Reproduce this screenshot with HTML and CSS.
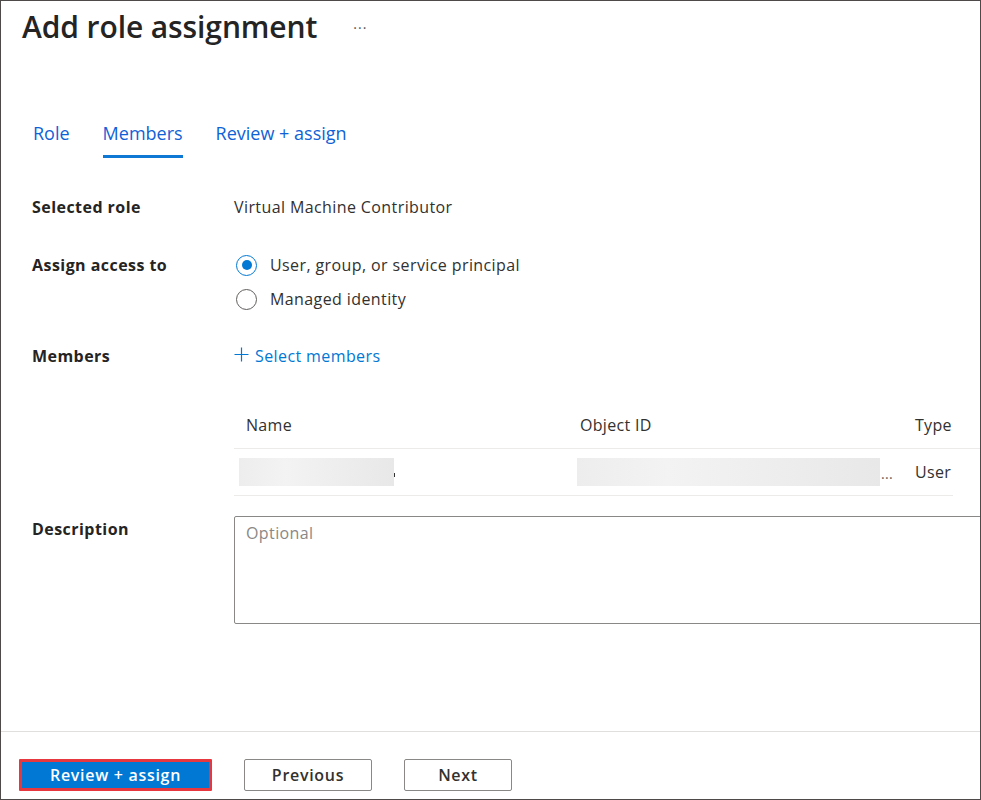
FILE: index.html
```html
<!DOCTYPE html>
<html lang="en">
<head>
<meta charset="utf-8">
<title>Add role assignment</title>
<link rel="stylesheet" href="styles.css">
</head>
<body>
<div class="frame">
  <header class="header">
    <h1 class="title">Add role assignment</h1>
    <span class="more">···</span>
  </header>

  <nav class="tabs">
    <a class="tab">Role</a>
    <a class="tab active">Members</a>
    <a class="tab">Review + assign</a>
  </nav>

  <section class="form">
    <div class="row row-role">
      <div class="label">Selected role</div>
      <div class="value">Virtual Machine Contributor</div>
    </div>

    <div class="row row-access">
      <div class="label">Assign access to</div>
      <div class="value radios">
        <label class="radio"><span class="dot checked"></span>User, group, or service principal</label>
        <label class="radio"><span class="dot"></span>Managed identity</label>
      </div>
    </div>

    <div class="row row-members">
      <div class="label">Members</div>
      <div class="value">
        <a class="add-link"><svg class="plus" width="15" height="15" viewBox="0 0 15 15"><path d="M7.5 0.5v14M0.5 7.5h14" stroke="#0078d4" stroke-width="1.2" fill="none"/></svg>Select members</a>
      </div>
    </div>

    <div class="row row-table">
      <div class="label"></div>
      <div class="value table">
        <div class="trow thead">
          <div class="cell c-name">Name</div>
          <div class="cell c-id">Object ID</div>
          <div class="cell c-type">Type</div>
        </div>
        <div class="trow tbody">
          <div class="cell c-name"><span class="blur blur-name"></span><span class="tick"></span></div>
          <div class="cell c-id"><span class="blur blur-id"></span><span class="ellipsis">...</span></div>
          <div class="cell c-type">User</div>
        </div>
      </div>
    </div>

    <div class="row row-desc">
      <div class="label">Description</div>
      <div class="value">
        <textarea class="desc" placeholder="Optional"></textarea>
      </div>
    </div>
  </section>

  <footer class="footer">
    <button class="btn primary">Review + assign</button>
    <button class="btn secondary prev">Previous</button>
    <button class="btn secondary next">Next</button>
  </footer>
</div>
</body>
</html>
```

FILE: styles.css
```css
* { box-sizing: border-box; }

html, body {
  margin: 0;
  padding: 0;
  background: #ffffff;
}

body {
  font-family: "Open Sans", "Noto Sans", "Liberation Sans", sans-serif;
  color: #323130;
  font-size: 16px;
}

.frame {
  width: 981px;
  height: 800px;
  border: 1px solid #4e4a4a;
  overflow: hidden;
  display: flex;
  flex-direction: column;
  background: #fff;
}

.header {
  display: flex;
  align-items: center;
  padding: 9px 0 0 21px;
  height: 43px;
}

.title {
  margin: 0;
  font-size: 30px;
  font-weight: 600;
  color: #242424;
  line-height: 38px;
  letter-spacing: -0.1px;
}

.more {
  margin-left: 36px;
  font-size: 14px;
  color: #555;
  letter-spacing: 1px;
  line-height: 20px;
  margin-top: 2px;
}

.tabs {
  display: flex;
  gap: 33px;
  padding-left: 32px;
  margin-top: 70px;
  height: 44px;
}

.tab {
  font-size: 18px;
  color: #0f62d6;
  line-height: 24px;
  padding-top: 7px;
  height: 44px;
  cursor: pointer;
}

.tab.active {
  border-bottom: 3px solid #0f78d4;
}

.form {
  display: flex;
  flex-direction: column;
}

.row {
  display: flex;
}

.label {
  width: 233px;
  flex: none;
  padding-left: 31px;
  font-weight: 700;
  font-size: 16px;
  letter-spacing: 0.45px;
  line-height: 20px;
  color: #252423;
}

.value {
  flex: 1;
  line-height: 20px;
  font-size: 16px;
  letter-spacing: 0.4px;
  color: #323130;
}

.row-role { margin-top: 39px; }

.row-access { margin-top: 38px; }

.radios {
  display: flex;
  flex-direction: column;
  gap: 14px;
}

.radio {
  display: flex;
  align-items: center;
  gap: 13px;
  padding-left: 2px;
  height: 20px;
}

.dot {
  width: 21px;
  height: 21px;
  border-radius: 50%;
  border: 1px solid #605e5c;
  flex: none;
  position: relative;
}

.dot.checked {
  border-color: #0078d4;
}

.dot.checked::after {
  content: "";
  position: absolute;
  left: 4.5px;
  top: 4.5px;
  width: 10px;
  height: 10px;
  border-radius: 50%;
  background: #0078d4;
}

.row-members { margin-top: 37px; }

.add-link {
  display: inline-flex;
  align-items: center;
  color: #0078d4;
  cursor: pointer;
}

.plus {
  margin-right: 6px;
  margin-top: -3px;
}

.row-table { margin-top: 36px; }

.table {
  display: flex;
  flex-direction: column;
  letter-spacing: 0.3px;
}

.trow {
  display: flex;
  align-items: center;
}

.thead {
  height: 47px;
  border-bottom: 1px solid #edebe9;
  color: #323130;
  font-weight: 500;
}

.tbody {
  height: 47px;
  border-bottom: 1px solid #edebe9;
  margin-right: 27px;
}

.cell {
  display: flex;
  align-items: center;
}

.c-name { width: 334px; padding-left: 12px; }
.c-id { width: 335px; padding-left: 12px; }
.c-type { padding-left: 12px; }

.tbody .c-name { padding-left: 5px; }
.tbody .c-id { padding-left: 9px; }

.blur {
  display: block;
  height: 28px;
  background: linear-gradient(90deg, #ededed 0%, #f3f3f3 30%, #efefef 55%, #e8e8e8 100%);
}

.blur-name { width: 155px; }
.blur-id { width: 303px; }

.tick {
  display: block;
  width: 1px;
  height: 4px;
  background: #333;
  margin-top: 6px;
}

.ellipsis {
  color: #605e5c;
  margin-left: 1px;
  font-size: 14px;
  margin-top: 4px;
}

.tbody .c-type { color: #323130; }

.row-desc { margin-top: 20px; }

.row-desc .label { padding-top: 3px; }

.desc {
  display: block;
  width: 800px;
  height: 108px;
  border: 1px solid #8a8886;
  border-radius: 2px;
  padding: 5px 11px;
  font-family: "Open Sans", "Noto Sans", "Liberation Sans", sans-serif;
  font-size: 16px;
  letter-spacing: 0.4px;
  resize: none;
  outline: none;
  color: #323130;
}

.desc::placeholder {
  color: #8a8886;
  font-weight: 400;
}

.footer {
  margin-top: auto;
  height: 68px;
  border-top: 1px solid #e1dfdd;
  display: flex;
  align-items: flex-start;
  padding: 27px 0 0 18px;
  gap: 32px;
}

.btn {
  height: 32px;
  font-family: "Open Sans", "Noto Sans", "Liberation Sans", sans-serif;
  font-size: 16px;
  font-weight: 600;
  letter-spacing: 0.7px;
  border-radius: 2px;
  cursor: pointer;
  padding: 0;
}

.btn.primary {
  width: 193px;
  background: #0078d4;
  color: #ffffff;
  border: 3px solid #e8383f;
  border-radius: 1px;
}

.btn.secondary {
  background: #fff;
  color: #323130;
  border: 1px solid #8a8886;
}

.prev { width: 128px; }
.next { width: 108px; }
```
